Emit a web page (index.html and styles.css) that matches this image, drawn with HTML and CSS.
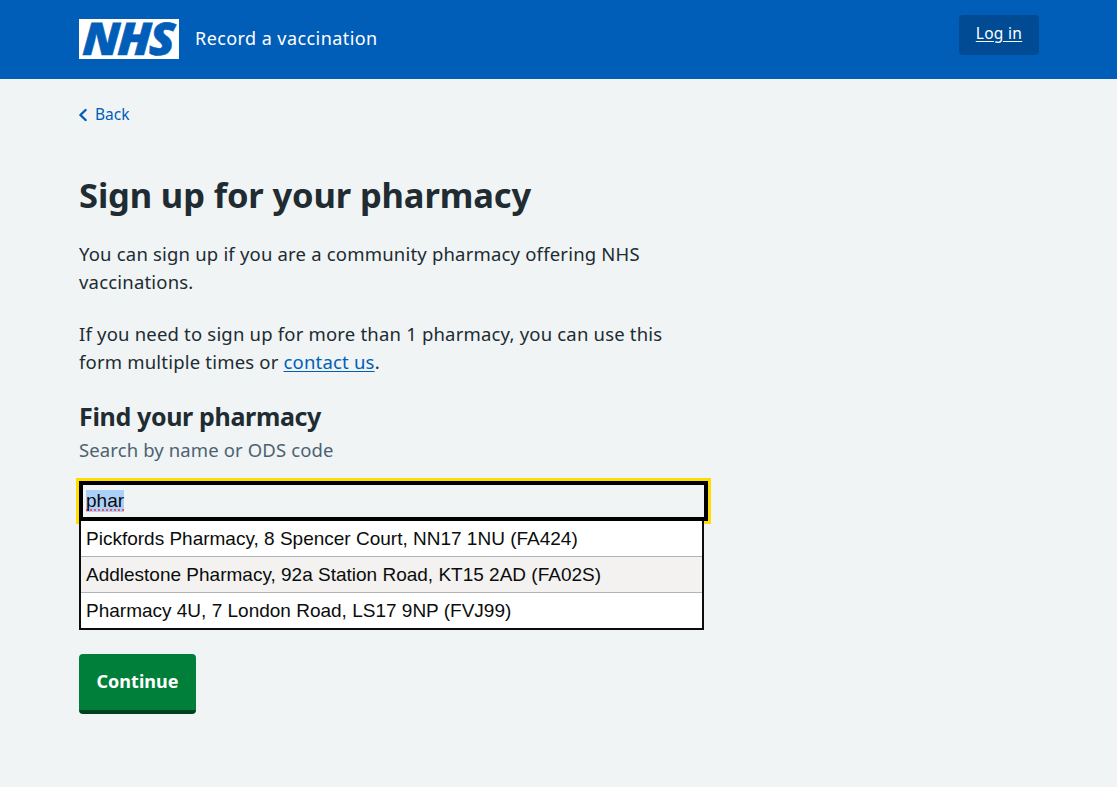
FILE: index.html
```html
<!DOCTYPE html>
<html lang="en">
<head>
<meta charset="utf-8">
<title>Sign up for your pharmacy</title>
<link rel="stylesheet" href="styles.css">
</head>
<body>
<header class="header">
  <div class="container header-inner">
    <a class="brand" href="#">
      <svg class="logo" width="100" height="40" viewBox="0 0 100 40" role="img" aria-label="NHS">
        <rect width="100" height="40" fill="#fff"/>
        <text class="logo-text" x="0" y="0" transform="translate(3 36) skewX(-3)" textLength="90" lengthAdjust="spacingAndGlyphs">NHS</text>
      </svg>
      <span class="service">Record a vaccination</span>
    </a>
    <a class="login" href="#">Log in</a>
  </div>
</header>
<div class="container">
  <a class="back" href="#">
    <svg width="8" height="14" viewBox="0 0 8 14" fill="none" stroke="#005eb8" stroke-width="2.4" stroke-linecap="round" stroke-linejoin="round"><path d="M6.6 2 1.4 7l5.2 5"/></svg>
    <span class="back-text">Back</span>
  </a>
  <main class="main">
    <h1 class="title">Sign up for your pharmacy</h1>
    <p class="body">You can sign up if you are a community pharmacy offering NHS<br>vaccinations.</p>
    <p class="body">If you need to sign up for more than 1 pharmacy, you can use this<br>form multiple times or <a class="link" href="#">contact us</a>.</p>
    <h2 class="label">Find your pharmacy</h2>
    <div class="hint">Search by name or ODS code</div>
    <div class="autocomplete">
      <div class="field"><span class="typed">phar</span></div>
      <ul class="menu">
        <li class="option">Pickfords Pharmacy, 8 Spencer Court, NN17 1NU (FA424)</li>
        <li class="option option-alt">Addlestone Pharmacy, 92a Station Road, KT15 2AD (FA02S)</li>
        <li class="option">Pharmacy 4U, 7 London Road, LS17 9NP (FVJ99)</li>
      </ul>
    </div>
    <button class="button" type="button">Continue</button>
  </main>
</div>
</body>
</html>
```
FILE: styles.css
```css
* { box-sizing: border-box; }
body { margin: 0; background: #f0f4f5; color: #212b32; font-family: "Noto Sans", "Open Sans", sans-serif; font-size: 19px; line-height: 28px; }
.container { width: 960px; margin: 0 auto 0 79px; }
.header { background: #005eb8; height: 79px; }
.header-inner { display: flex; justify-content: space-between; align-items: flex-start; padding-top: 15px; }
.brand { display: flex; align-items: center; gap: 16px; margin-top: 4px; height: 40px; color: #fff; text-decoration: none; }
.logo { display: block; overflow: visible; }
.logo-text { font-family: "Open Sans", sans-serif; font-weight: 800; font-style: italic; font-size: 45px; letter-spacing: -2px; fill: #005eb8; stroke: #005eb8; stroke-width: 0.6px; }
.service { font-size: 18px; letter-spacing: 0.43px; white-space: nowrap; padding-bottom: 2px; }
.login { width: 80px; height: 40px; border-radius: 4px; background: #004b93; color: #fff; font-size: 15.5px; letter-spacing: 0.3px; line-height: 37px; text-align: center; text-underline-offset: 2px; }
.back { display: flex; align-items: center; gap: 8px; height: 24px; margin-top: 24px; width: max-content; color: #005eb8; font-size: 15.5px; line-height: 22px; text-decoration: none; }
.back-text { padding-bottom: 2px; }
.main { width: 630px; padding-top: 43px; }
.title { margin: 0 0 20px; font-size: 34.5px; letter-spacing: -0.13px; line-height: 50px; font-weight: 700; white-space: nowrap; }
.body { margin: 0 0 24px; font-size: 18.5px; letter-spacing: 0.19px; white-space: nowrap; }
.link { color: #005eb8; text-decoration-thickness: 1px; text-underline-offset: 2px; }
.label { margin: 0; font-size: 25px; letter-spacing: -0.35px; line-height: 32px; font-weight: 700; }
.hint { padding-top: 3px; color: #4c6272; font-size: 18.5px; letter-spacing: 0.12px; line-height: 30px; margin-bottom: 16px; }
.autocomplete { font-family: "Liberation Sans", Arial, sans-serif; }
.field { position: relative; width: 629px; height: 40px; border: 4px solid #000; box-shadow: 0 0 0 3px #ffdd00; padding: 5px 3px; line-height: 22px; color: #0b0c0c; }
.typed { display: inline-block; height: 22px; background: #acd1f9; text-decoration: underline dotted #ff4c55 2px; text-underline-offset: 2px; text-decoration-skip-ink: none; }
.menu { position: relative; width: 625px; margin: 0; padding: 0; list-style: none; background: #fff; border: 2px solid #0b0c0c; border-top: 0; color: #0b0c0c; }
.option { height: 36px; padding: 0 5px; line-height: 35px; border-bottom: 1px solid #b1b4b6; white-space: nowrap; }
.option:last-child { height: 35px; border-bottom: 0; }
.option-alt { background: #f3f2f1; }
.button { display: block; width: 117px; height: 60px; margin: 24px 0 0; padding: 0 0 5px; border: 0; border-radius: 4px; background: linear-gradient(#007f3b 56px, #00401e 56px); color: #fff; font: 700 18px/53px "Noto Sans", "Open Sans", sans-serif; }
```
